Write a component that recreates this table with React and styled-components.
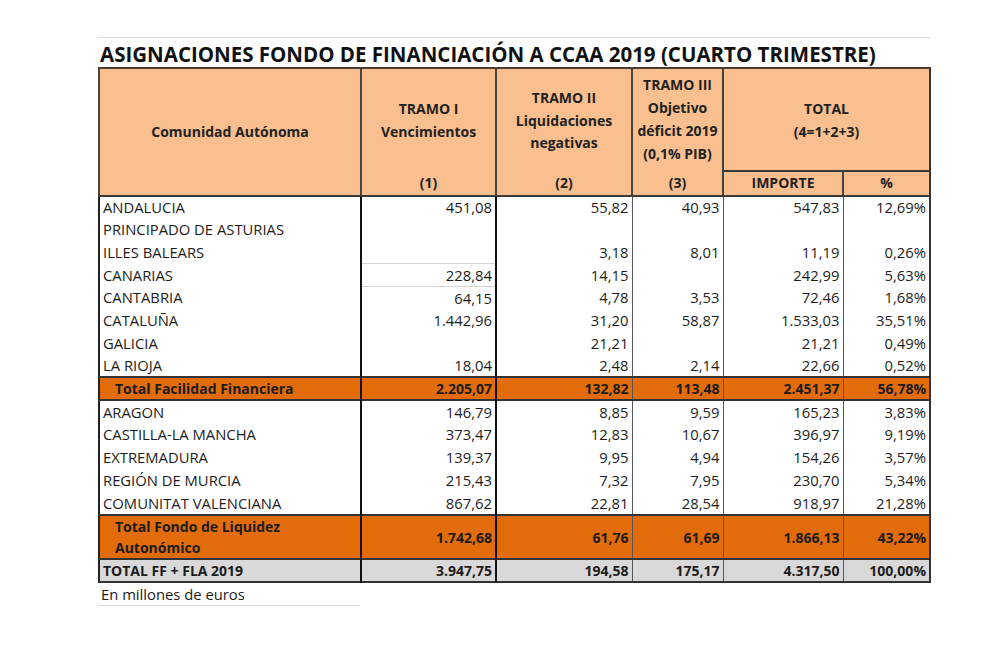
import React from 'react';
import styled, { createGlobalStyle } from 'styled-components';

const GlobalStyle = createGlobalStyle`
  html, body {
    margin: 0;
    padding: 0;
    background: #ffffff;
  }
  body {
    font-family: 'Open Sans', 'Liberation Sans', sans-serif;
    color: #1c1c1c;
  }
`;

const Page = styled.div`
  padding: 37px 0 0 98px;
  width: 832px;
`;

const Title = styled.h1`
  margin: 0;
  height: 30px;
  border-top: 1px solid #dcdcdc;
  box-sizing: border-box;
  padding: 3px 0 0 2px;
  font-size: 20.5px;
  font-weight: 700;
  line-height: 26px;
  color: #111;
  white-space: nowrap;
`;

const Table = styled.table`
  border-collapse: collapse;
  table-layout: fixed;
  width: 831px;
  font-size: 14.8px;
  border-left: 2px solid #222;
  border-right: 2px solid #333;
`;

const HeadRow = styled.tr`
  background: #fabf8f;
  height: ${(p) => p.$h}px;
`;

const HeadCell = styled.th`
  font-size: 14px;
  font-weight: 700;
  text-align: center;
  vertical-align: middle;
  padding: ${(p) => (p.$low ? '2px 4px 0' : '0 4px')};
  line-height: 22.8px;
  color: #222;
  border-top: ${(p) => (p.$top ? '2px solid #4a3a30' : 'none')};
  border-bottom: ${(p) => (p.$bottom ? '2px solid #3a3a3a' : 'none')};
  border-left: 2px solid #444;
`;

const Row = styled.tr`
  height: ${(p) => p.$h || 22.7}px;
  background: ${(p) => p.$bg || 'transparent'};
  border-top: ${(p) => (p.$ruled ? '2px solid #333' : 'none')};
  border-bottom: ${(p) => (p.$ruled ? '2px solid #333' : 'none')};
`;

const Cell = styled.td`
  padding: 0 3px;
  text-align: right;
  white-space: nowrap;
  font-size: ${(p) => (p.$bold ? 14 : 14.8)}px;
  font-weight: ${(p) => (p.$bold ? 700 : 400)};
  line-height: 21px;
  border-left: ${(p) => (p.$strong ? '2px solid #111' : '1px solid #555')};
  border-top: ${(p) => (p.$rule ? '1px solid #d6d6d6' : 'none')};
  border-bottom: ${(p) => (p.$rule ? '1px solid #d6d6d6' : 'none')};
`;

const LabelCell = styled.td`
  padding: 0 0 0 ${(p) => (p.$indent ? 15 : 3)}px;
  text-align: left;
  white-space: nowrap;
  font-size: ${(p) => (p.$bold ? 14 : 14.8)}px;
  font-weight: ${(p) => (p.$bold ? 700 : 400)};
  line-height: 21px;
`;

const Footnote = styled.div`
  width: 262px;
  height: 23px;
  box-sizing: border-box;
  padding: 1px 0 0 3px;
  font-size: 14.8px;
  line-height: 21px;
  border-bottom: 1px solid #e0e0e0;
`;

const regionsFF = [
  ['ANDALUCIA', '451,08', '55,82', '40,93', '547,83', '12,69%'],
  ['PRINCIPADO DE ASTURIAS', '', '', '', '', ''],
  ['ILLES BALEARS', '', '3,18', '8,01', '11,19', '0,26%'],
  ['CANARIAS', '228,84', '14,15', '', '242,99', '5,63%'],
  ['CANTABRIA', '64,15', '4,78', '3,53', '72,46', '1,68%'],
  ['CATALUÑA', '1.442,96', '31,20', '58,87', '1.533,03', '35,51%'],
  ['GALICIA', '', '21,21', '', '21,21', '0,49%'],
  ['LA RIOJA', '18,04', '2,48', '2,14', '22,66', '0,52%'],
];

const regionsFLA = [
  ['ARAGON', '146,79', '8,85', '9,59', '165,23', '3,83%'],
  ['CASTILLA-LA MANCHA', '373,47', '12,83', '10,67', '396,97', '9,19%'],
  ['EXTREMADURA', '139,37', '9,95', '4,94', '154,26', '3,57%'],
  ['REGIÓN DE MURCIA', '215,43', '7,32', '7,95', '230,70', '5,34%'],
  ['COMUNITAT VALENCIANA', '867,62', '22,81', '28,54', '918,97', '21,28%'],
];

const totalFF = ['2.205,07', '132,82', '113,48', '2.451,37', '56,78%'];
const totalFLA = ['1.742,68', '61,76', '61,69', '1.866,13', '43,22%'];
const grandTotal = ['3.947,75', '194,58', '175,17', '4.317,50', '100,00%'];

const Values = ({ values, bold, ruleCol }) =>
  values.map((v, i) => (
    <Cell key={i} $bold={bold} $strong={i < 2} $rule={ruleCol === i}>
      {v}
    </Cell>
  ));

const App = () => (
  <>
    <GlobalStyle />
    <Page>
      <Title>ASIGNACIONES FONDO DE FINANCIACIÓN A CCAA 2019 (CUARTO TRIMESTRE)</Title>
      <Table>
        <colgroup>
          <col style={{ width: 262 }} />
          <col style={{ width: 135 }} />
          <col style={{ width: 136 }} />
          <col style={{ width: 91 }} />
          <col style={{ width: 120 }} />
          <col style={{ width: 87 }} />
        </colgroup>
        <thead>
          <HeadRow $h={103}>
            <HeadCell rowSpan={2} $top $bottom>
              Comunidad Autónoma
            </HeadCell>
            <HeadCell $top $low>
              TRAMO I
              <br />
              Vencimientos
            </HeadCell>
            <HeadCell $top $low>
              TRAMO II
              <br />
              Liquidaciones
              <br />
              negativas
            </HeadCell>
            <HeadCell $top>
              TRAMO III
              <br />
              Objetivo
              <br />
              déficit 2019
              <br />
              (0,1% PIB)
            </HeadCell>
            <HeadCell colSpan={2} $top $bottom $low>
              TOTAL
              <br />
              (4=1+2+3)
            </HeadCell>
          </HeadRow>
          <HeadRow $h={24}>
            <HeadCell $bottom>(1)</HeadCell>
            <HeadCell $bottom>(2)</HeadCell>
            <HeadCell $bottom>(3)</HeadCell>
            <HeadCell $bottom>IMPORTE</HeadCell>
            <HeadCell $bottom>%</HeadCell>
          </HeadRow>
        </thead>
        <tbody>
          {regionsFF.map(([name, ...values]) => (
            <Row key={name}>
              <LabelCell>{name}</LabelCell>
              <Values values={values} ruleCol={name === 'CANARIAS' ? 0 : -1} />
            </Row>
          ))}
          <Row $bg="#e26b0a" $ruled>
            <LabelCell $bold $indent>
              Total Facilidad Financiera
            </LabelCell>
            <Values values={totalFF} bold />
          </Row>
          {regionsFLA.map(([name, ...values]) => (
            <Row key={name} $h={23}>
              <LabelCell>{name}</LabelCell>
              <Values values={values} />
            </Row>
          ))}
          <Row $bg="#e26b0a" $ruled $h={44}>
            <LabelCell $bold $indent>
              Total Fondo de Liquidez
              <br />
              Autonómico
            </LabelCell>
            <Values values={totalFLA} bold />
          </Row>
          <Row $bg="#d9d9d9" $ruled $h={21.5}>
            <LabelCell $bold>TOTAL FF + FLA 2019</LabelCell>
            <Values values={grandTotal} bold />
          </Row>
        </tbody>
      </Table>
      <Footnote>En millones de euros</Footnote>
    </Page>
  </>
);

export default App;
